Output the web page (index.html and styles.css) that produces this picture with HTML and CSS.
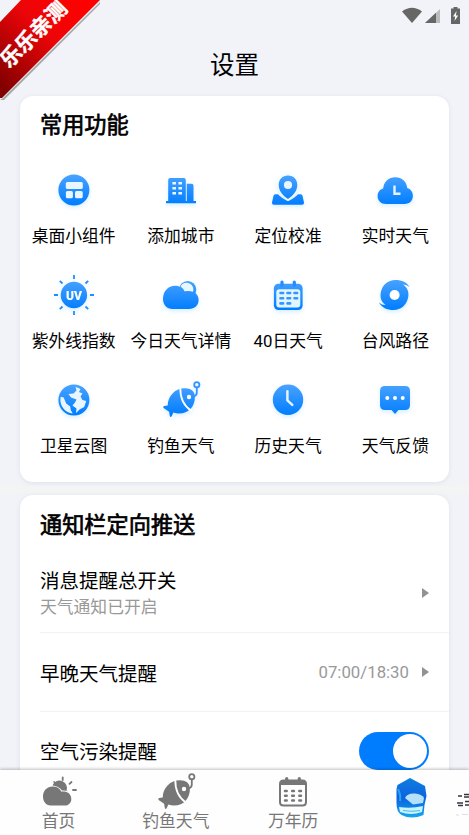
FILE: index.html
```html
<!DOCTYPE html>
<html lang="zh-CN">
<head>
<meta charset="utf-8">
<meta name="viewport" content="width=device-width">
<title>设置</title>
<link rel="stylesheet" href="styles.css">
</head>
<body>
<svg class="defs" width="0" height="0" aria-hidden="true">
  <defs>
    <linearGradient id="blue" gradientUnits="userSpaceOnUse" x1="0" y1="6" x2="0" y2="37"><stop offset="0" stop-color="#4ba3ff"/><stop offset="1" stop-color="#007dff"/></linearGradient>
    <linearGradient id="red" gradientUnits="userSpaceOnUse" x1="85" y1="5" x2="5" y2="90"><stop offset="0" stop-color="#ff0000"/><stop offset=".4" stop-color="#ec0508"/><stop offset="1" stop-color="#820000"/></linearGradient>
    <linearGradient id="badge" x1="0" y1="0" x2="0" y2="1"><stop offset="0" stop-color="#087fe0"/><stop offset=".5" stop-color="#0862df"/><stop offset="1" stop-color="#18a6ed"/></linearGradient>
    <filter id="soft" x="-10%" y="-10%" width="120%" height="120%"><feGaussianBlur stdDeviation=".6"/></filter>
    <symbol id="fish" viewBox="0 0 44 44">
      <path d="M8.700 27.500C9 17.500 16.500 10.200 26 10.300c6 0 9.500 2.700 9.900 8C36.200 28 30 35.600 20 35.600q-3 0-5.600-1l-1.900 4q-1 .8-1.600-.3l-.8-4.600-5.500-3.800q-1-1.400.6-1.900z"/>
      <path class="cut" d="M21.300 9.500c-.3 11 3.700 18.500 11.200 23.500"/>
      <circle class="hole" cx="30" cy="19" r="2.200"/>
      <path class="hook" d="M37.800 9.500v5q0 3-3 4"/><circle class="hook" cx="37.800" cy="6.700" r="2.600"/>
    </symbol>
  </defs>
</svg>
<div class="screen">
  <header class="status">
    <svg width="60" height="20" viewBox="400 6 60 20">
      <path d="M402 11.500q10-7.500 20 0L412 23z" fill="#666"/>
      <path d="M440 9v14h-15z" fill="#bbb"/><path d="M436 12.800V23h-11z" fill="#666"/>
      <path d="M453.500 7h4v1.500h2.500V24h-9V8.500h2.500z" fill="#666"/><path d="M456.600 11l-3.600 5.500h2.200l-.7 4.500 3.700-5.600h-2.300z" fill="#fff"/>
    </svg>
  </header>
  <h1 class="title">设置</h1>
  <section class="card features">
    <h2>常用功能</h2>
    <div class="grid">
      <div class="item"><svg class="icon" viewBox="0 0 44 44"><circle cx="21.900" cy="22" r="15.500"/><g class="pale"><rect x="13.800" y="14" width="17" height="7" rx="1.500"/><rect x="13.900" y="23" width="7" height="7.200" rx="1.500"/><rect x="23" y="23" width="7.700" height="7.200" rx="1.500"/></g></svg><span>桌面小组件</span></div>
      <div class="item"><svg class="icon" viewBox="0 0 44 44"><path d="M9.200 33V12q0-2 2-2h13.600q2 0 2 2v21h1V15.700h4.700q2 0 2 2V33H37v2.200H7V33z"/><path class="pale" d="M13.400 14H17v2.500h-3.600zm6 0H23v2.500h-3.600zm-6 5H17v2.500h-3.600zm6 0H23v2.500h-3.600zm-6 5H17v2.600h-3.600zm6 0H23v2.600h-3.600z"/></svg><span>添加城市</span></div>
      <div class="item"><svg class="icon" viewBox="0 0 44 44"><path d="M9 26.300h3q2.500 3 9.500 6.700h1q7-3.700 9.500-6.700h3q1 0 1.500 1.500L38 34.500q.3 2.200-2 2.200H8q-2.300 0-2-2.200l1.500-6.700Q8 26.300 9 26.300z"/><path class="pin" d="M22 7.600c-5.600 0-9.300 4-9.300 9.400 0 6.500 4.800 11 9.300 14 4.500-3 9.300-7.500 9.300-14 0-5.400-3.700-9.400-9.300-9.400z"/><circle class="pale" cx="22" cy="17" r="4.100"/></svg><span>定位校准</span></div>
      <div class="item"><svg class="icon" viewBox="0 0 44 44"><path d="M13 36c-5 0-8.400-3.300-8.400-8 0-3.800 2.300-6.600 5.600-7.500C11 13.500 15.600 9.200 22.300 9.200S33.500 13.500 34.200 20c3.500 1 5.700 4 5.700 7.800 0 4.900-3.300 8.200-8.300 8.200z"/><path d="M21.500 17.500v8.300h6" fill="none" stroke="#e4f4ff" stroke-width="2.400"/></svg><span>实时天气</span></div>
      <div class="item"><svg class="icon" viewBox="0 0 44 44"><circle cx="21.900" cy="22" r="13.200"/><path class="line" d="M22 2v4M22 38v4M2 22h4M38 22h4M7.800 7.800l2.700 2.700M33.500 33.500l2.700 2.700M36.200 7.800l-2.700 2.700M10.500 33.500l-2.700 2.700"/><text x="22" y="26.500" text-anchor="middle" textLength="16" lengthAdjust="spacingAndGlyphs">UV</text></svg><span>紫外线指数</span></div>
      <div class="item"><svg class="icon" viewBox="0 0 44 44"><circle cx="28.700" cy="16.500" r="8.600"/><path d="M21.500 13.500a6.300 6.300 0 1 1 12.200 6q-6-1.500-8-1-1.500-3-4.200-5z" fill="#e9f6ff"/><path d="M13.500 36C8 36 4 32 4 26c0-8 5.500-13.300 12-13.300 5 0 8 2.500 9.600 6 1-.5 2-.7 4-.7 6 0 10 3.700 10 9s-4 9-9.600 9z"/></svg><span>今日天气详情</span></div>
      <div class="item"><svg class="icon" viewBox="0 0 44 44"><rect x="7.900" y="10.700" width="28.700" height="26.300" rx="4.500"/><path class="line round" d="M16 9v3M28.300 9v3"/><rect x="10.300" y="16.300" width="24" height="18.300" rx="3" fill="#e1f5ff"/><path d="M14.500 20h2.600M21.500 20h2.600M28.500 20h2.600M14.500 25.300h2.600M21.500 25.300h2.600M28.500 25.300h2.600M14.500 30.400h2.600M21.500 30.400h2.600" fill="none" stroke="#3495ff" stroke-width="2.600" stroke-linecap="round"/></svg><span>40日天气</span></div>
      <div class="item"><svg class="icon" viewBox="0 0 44 44"><path d="M36.600 14q-3-2.700-6.500-2.500c4 3 6 7 5.200 12C34 32 28 37 20.500 37 14 37 8.500 34.500 6 29.500q3 2.700 6.500 2.500C8.500 29 7 25 7.700 20 9 12 15 7 22.500 7c6.500 0 11.500 2.500 14.100 7z"/><circle cx="21.600" cy="22" r="5" fill="#fff"/></svg><span>台风路径</span></div>
      <div class="item"><svg class="icon" viewBox="0 0 44 44"><circle cx="21.900" cy="22" r="15.500"/><path d="M23.500 8.700l5 2.200-1.500 3 3.500 1.500-2 3 2 3.500 3.700 1-2 6-4.700 2.500-3.500 3.500.5-4.500-4-3 2.500-3 1.500-3-5.500-2-2.500-3.500 5-.5 3-3zM8.700 18.800l3 .7 2.500 6 4 3 .5 3.500 2 3.500C13.500 34.500 8.500 29 8.400 22z" fill="#e9f6ff"/></svg><span>卫星云图</span></div>
      <div class="item"><svg class="icon fishy" viewBox="0 0 44 44"><use href="#fish" width="44" height="44"/></svg><span>钓鱼天气</span></div>
      <div class="item"><svg class="icon" viewBox="0 0 44 44"><circle cx="22" cy="21.700" r="15.200"/><path d="M21.400 13.300v9l4.900 4.500" fill="none" stroke="#e4f4ff" stroke-width="2.500" stroke-linecap="round" stroke-linejoin="round"/></svg><span>历史天气</span></div>
      <div class="item"><svg class="icon" viewBox="0 0 44 44"><path d="M12 8h20q5 0 5 5v14q0 5-5 5h-6.500L22 36l-3.500-4H12q-5 0-5-5V13q0-5 5-5z"/><g fill="#fff"><circle cx="14.300" cy="20" r="2"/><circle cx="22" cy="20" r="2"/><circle cx="29.700" cy="20" r="2"/></g></svg><span>天气反馈</span></div>
    </div>
  </section>
  <div class="divider"></div>
  <section class="card push">
    <h2>通知栏定向推送</h2>
    <div class="row row-master"><div class="copy"><span>消息提醒总开关</span><small>天气通知已开启</small></div><i class="arrow"></i></div>
    <div class="row row-time"><span>早晚天气提醒</span><span class="value">07:00/18:30</span><i class="arrow"></i></div>
    <div class="row row-air"><span>空气污染提醒</span><div class="toggle"><i></i></div></div>
  </section>
  <nav class="tabs">
    <div class="tab"><svg viewBox="0 0 44 44"><path d="M15.500 15.500a7.200 7.200 0 0 1 14 5q1 .4 1.500 1-2.500-1.500-6-1-3.500-4.500-9.500-5z"/><path d="M13.500 35.500C9 35.500 6 31.500 6 26.300c0-5.500 4-9.800 9.700-9.800 4 0 7 1.800 8.800 5.200 5-.7 9.800 1.800 9.800 7.200 0 4-2.800 6.600-6.600 6.600z"/><path class="line" d="M25.700 7.300v2.700M17.200 12l1.400 1.700M34.500 12l-2 1.800M36 20h3" stroke-linecap="round"/></svg><span>首页</span></div>
    <div class="tab"><svg class="fishy" viewBox="0 0 44 44"><use href="#fish" width="44" height="44"/></svg><span>钓鱼天气</span></div>
    <div class="tab"><svg viewBox="0 0 44 44"><path fill-rule="evenodd" d="M12.500 9.500h19q4.500 0 4.500 4.500v18q0 4.500-4.500 4.500h-19Q8 36.500 8 32V14q0-4.500 4.500-4.500zM10 15v17q0 2.500 2.500 2.500h19q2.500 0 2.500-2.500V15z"/><path class="line round" d="M15.700 8.500v3M28.300 8.500v3"/><path d="M14 21h1.700M21.200 21h1.700M28.300 21h1.700M14 25.800h1.700M21.200 25.800h1.700M28.300 25.800h1.700M14 30.500h1.700M21.200 30.500h1.700M28.300 30.500h1.700" stroke="#777" stroke-width="2.500" stroke-linecap="round"/></svg><span>万年历</span></div>
    <div class="tab settings"><svg viewBox="352 770 117 65">
      <g filter="url(#soft)"><path d="M410 778l15 8 1.500 10-2 9-1 10q-12 5-22 0-5-3-5-12v-14l1-4z" fill="url(#badge)"/><path d="M405 798q2-5 10-4.500 7 .5 9 4.500l-1 5-10 1.500z" fill="#b5e0fa"/><path d="M399 807q12 2 24-1l-1 6q-11 4-22 0z" fill="#c6f5ff"/><path d="M403 810.500q9 1.500 17 0" stroke="#58b4e8" stroke-width="1.200" fill="none"/><path d="M398 789q3 6 2 12" stroke="#2aa2f0" stroke-width="2" fill="none"/></g>
      <g filter="url(#soft)"><path d="M458 796h4M464 794.500h5M464 797h5M457 803h6M465 801.500h4M458 805.500h5M465 805h4" stroke="#303840" stroke-width="1.700"/><path d="M456 815h3M462 814.500h6" stroke="#dedede"/></g>
    </svg></div>
  </nav>
  <div class="ribbon"><svg viewBox="0 0 104 104"><path d="M3 98L100 2v2L4 100H0z" fill="#777" opacity=".6" filter="url(#soft)"/><path d="M0 22L21 0h79L2 98H0z" fill="url(#red)"/><text transform="translate(33.500 34) rotate(-45)" text-anchor="middle" y="7.500">乐乐亲测</text></svg></div>
</div>
</body>
</html>
```
FILE: styles.css
```css
* { box-sizing: border-box; }
body { margin: 0; font-family: Roboto, "Noto Sans CJK SC", sans-serif; color: #000; }
h1, h2 { margin: 0; font-weight: 400; }
.defs { display: block; }
.screen { position: relative; width: 469px; height: 835px; overflow: hidden; background: #f1f3f8; }
.status { height: 32px; padding: 6px 9px 0 0; display: flex; justify-content: flex-end; }
.title { height: 64px; line-height: 64px; padding-top: 2px; text-align: center; font-size: 24.500px; }
.card { margin: 0 20px; background: #fff; border-radius: 13px; box-shadow: 0 1px 5px rgba(70, 80, 100, .1); }
.card h2 { padding-left: 20px; height: 60px; line-height: 60px; font-size: 22.200px; -webkit-text-stroke: .7px #000; }
.features { height: 386px; }
.features h2 { line-height: 59px; }
.grid { display: grid; grid-template-columns: repeat(4, 1fr); grid-auto-rows: 105px; padding-top: 12px; }
.item { display: flex; flex-direction: column; align-items: center; white-space: nowrap; font-size: 16.800px; line-height: 24px; }
.item span { margin-top: 11.500px; }
.icon { width: 44px; height: 44px; fill: url(#blue); color: #3394ff; filter: drop-shadow(0 2px 2px rgba(30, 160, 255, .18)); overflow: visible; }
.icon .line { stroke: #258cff; }
.line { fill: none; stroke: #258cff; stroke-width: 1.800; }
.hook { fill: none; stroke: currentColor; stroke-width: 1.800; }
.fishy { stroke-linecap: round; }
.round { stroke-width: 3.200; stroke-linecap: round; }
.pale { fill: #e9f6ff; }
.pin { stroke: #f5fbff; stroke-width: 2.600; paint-order: stroke; }
.cut { fill: none; stroke: #fff; stroke-width: 1.800; }
.hole { fill: #fff; }
.icon text { fill: #fff; font: 900 13px Roboto, sans-serif; }
.divider { height: 8px; margin: 4px 0 1px; background: #f4f4f4; }
.push { height: 400px; }
.row { margin-left: 20px; padding-right: 20px; display: flex; align-items: center; justify-content: space-between; font-size: 19.500px; border-bottom: 1px solid #f3f3f3; }
.row-master { height: 78px; padding-bottom: 1px; }
.row-time { height: 79px; padding-top: 0; }
.row-air { height: 79px; }
.row-air > span { padding-bottom: 2px; }
.copy { display: flex; flex-direction: column; line-height: 28px; }
.copy small { font-size: 16.800px; line-height: 22px; color: #999; }
.arrow { width: 0; height: 0; border: 5px solid transparent; border-left: 7px solid #929292; border-right: 0; }
.value { margin: 0 13px 0 auto; font-size: 16.800px; color: #999; }
.toggle { width: 70px; height: 38px; border-radius: 19px; background: #007dff; padding: 2px; display: flex; justify-content: flex-end; }
.toggle i { width: 34px; height: 34px; border-radius: 50%; background: #fff; }
.tabs { position: absolute; left: 0; right: 0; bottom: 0; height: 65px; display: grid; grid-template-columns: repeat(4, 1fr); background: #fefefe; box-shadow: 0 -1px 3px rgba(0, 0, 0, .25); }
.tab { display: flex; flex-direction: column; align-items: center; font-size: 16.800px; line-height: 22px; color: #777; }
.tab svg { width: 44px; height: 44px; flex: none; margin-bottom: -4px; fill: #777; }
.tab .line { stroke: #777; }
.tab.settings svg { width: 117px; height: 65px; }
.ribbon { position: absolute; left: 0; top: 0; width: 104px; height: 104px; }
.ribbon svg { display: block; width: 104px; height: 104px; }
.ribbon text { font: 700 21px "Noto Sans CJK SC", sans-serif; fill: #fff; stroke: #fff; stroke-width: .4; }
```
